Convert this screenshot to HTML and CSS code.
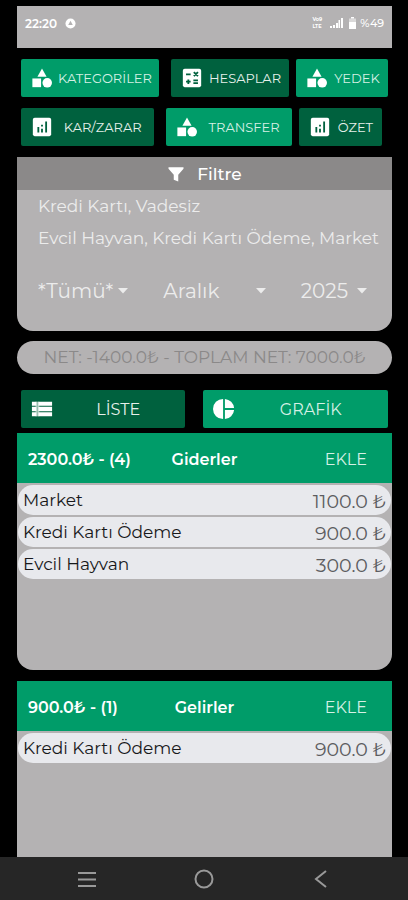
FILE: index.html
```html
<!DOCTYPE html>
<html lang="tr">
<head>
<meta charset="utf-8">
<meta name="viewport" content="width=device-width, initial-scale=1">
<title>Bütçe</title>
<link rel="stylesheet" href="styles.css">
</head>
<body>
<svg class="defs" aria-hidden="true">
  <symbol id="shapes" viewBox="0 0 24 24"><path d="M12 1.500 17 10.500H7z"/><path d="M1.500 12.500h9.500v9.500H1.500z"/><circle cx="17.700" cy="17.200" r="5.200"/></symbol>
  <symbol id="calc" viewBox="0 0 24 24"><rect x="2" y="2" width="20" height="20" rx="2"/><path class="cut" d="M5.500 8h5M14 5.500l4.500 4.500M18.500 5.500 14 10M5.500 16h5M8 13.500v5M13.500 14.500h5M13.500 17.500h5"/></symbol>
  <symbol id="chart" viewBox="0 0 24 24"><rect x="2" y="2" width="20" height="20" rx="2"/><path class="cut" d="M8 12v6M12 9.500v2M12 14v4M16.500 6v12"/></symbol>
  <symbol id="funnel" viewBox="0 0 24 24"><path d="M2 3h20v2l-7 8v9l-6-2.500V13L2 5z"/></symbol>
  <symbol id="list" viewBox="0 0 24 24"><path opacity="0.6" d="M5 4h4v16H5z"/><path d="M1 4h5v4.500H1zM8 4h15v4.500H8zM1 9.500h5v5H1zM8 9.500h15v5H8zM1 15.500h5V20H1zM8 15.500h15V20H8z"/></symbol>
  <symbol id="pie" viewBox="0 0 24 24"><path d="M11 1v22a11 11 0 0 1 0-22zM13 1a11 11 0 0 1 10 10H13zM13 13h10a11 11 0 0 1-10 10z"/></symbol>
  <symbol id="caret" viewBox="0 0 10 6"><path d="M0 0h10L5 5.500z"/></symbol>
</svg>
<div class="app">
  <header class="status">
    <span class="clock">22:20</span>
    <svg class="badge" viewBox="0 0 12 12" aria-hidden="true"><circle cx="6" cy="6" r="5.500"/><path d="M6 3 8.500 7.500h-5z"/></svg>
    <span class="volte"><span>Vo9</span><span>LTE</span></span>
    <svg class="signal" viewBox="0 0 13 12" aria-hidden="true"><path d="M0 9h2v2H0zM3 8h2v3H3zM6 6h2v5H6zM8.500 3h1.500v8H8.500zM11 1h2v10h-2z"/></svg>
    <svg class="battery" viewBox="0 0 7 12" aria-hidden="true"><path class="faint" d="M0 1.500h7V12H0z"/><path d="M2 0h3v1.500H2zM0 5h7v7H0z"/></svg>
    <span>%49</span>
  </header>

  <main class="content">
    <nav class="menu" aria-label="Menü">
      <div class="menu-row accounts">
        <button class="btn light"><svg class="icon"><use href="#shapes"/></svg><span>KATEGORİLER</span></button>
        <button class="btn dark"><svg class="icon"><use href="#calc"/></svg><span>HESAPLAR</span></button>
        <button class="btn light"><svg class="icon"><use href="#shapes"/></svg><span>YEDEK</span></button>
      </div>
      <div class="menu-row reports">
        <button class="btn dark"><svg class="icon"><use href="#chart"/></svg><span>KAR/ZARAR</span></button>
        <button class="btn light"><svg class="icon"><use href="#shapes"/></svg><span>TRANSFER</span></button>
        <button class="btn dark"><svg class="icon"><use href="#chart"/></svg><span>ÖZET</span></button>
      </div>
    </nav>

    <section class="filter">
      <h2 class="filter-title"><svg class="funnel"><use href="#funnel"/></svg>Filtre</h2>
      <button class="pick">Kredi Kartı, Vadesiz</button>
      <button class="pick">Evcil Hayvan, Kredi Kartı Ödeme, Market</button>
      <div class="period">
        <label class="drop"><select aria-label="Gün"><option>*Tümü*</option></select><svg class="caret"><use href="#caret"/></svg></label>
        <label class="drop"><select aria-label="Ay"><option>Aralık</option></select><svg class="caret"><use href="#caret"/></svg></label>
        <label class="drop"><select aria-label="Yıl"><option>2025</option></select><svg class="caret"><use href="#caret"/></svg></label>
      </div>
    </section>

    <p class="net">NET: -1400.0₺ - TOPLAM NET: 7000.0₺</p>

    <div class="views">
      <button class="btn dark"><svg class="icon"><use href="#list"/></svg><span>LİSTE</span></button>
      <button class="btn light"><svg class="icon"><use href="#pie"/></svg><span>GRAFİK</span></button>
    </div>

    <section class="panel expenses">
      <header class="panel-head"><strong>2300.0₺ - (4)</strong><h2>Giderler</h2><button>EKLE</button></header>
      <ul class="rows">
        <li><span>Market</span><span class="sum">1100.0 ₺</span></li>
        <li><span>Kredi Kartı Ödeme</span><span class="sum">900.0 ₺</span></li>
        <li><span>Evcil Hayvan</span><span class="sum">300.0 ₺</span></li>
      </ul>
    </section>

    <section class="panel income">
      <header class="panel-head"><strong>900.0₺ - (1)</strong><h2>Gelirler</h2><button>EKLE</button></header>
      <ul class="rows">
        <li><span>Kredi Kartı Ödeme</span><span class="sum">900.0 ₺</span></li>
      </ul>
    </section>
  </main>

  <nav class="system" aria-label="Sistem">
    <button aria-label="Son uygulamalar"><svg viewBox="0 0 20 20"><path d="M1 4h18M1 10.500h18M1 17h18"/></svg></button>
    <button aria-label="Ana ekran"><svg viewBox="0 0 20 20"><circle cx="10" cy="10" r="8.500"/></svg></button>
    <button aria-label="Geri"><svg viewBox="0 0 20 20"><path d="M15 2 5 10l10 8"/></svg></button>
  </nav>
</div>
</body>
</html>
```
FILE: styles.css
```css
* { box-sizing: border-box; }
body {
  margin: 0;
  background: #000;
  color: #fff;
  font-family: Montserrat, Inter, "Noto Sans", sans-serif;
  font-size: 17px;
}
h2, p, ul { margin: 0; padding: 0; list-style: none; }
button, select {
  margin: 0;
  padding: 0;
  border: 0;
  background: none;
  color: inherit;
  font: inherit;
}
svg { fill: currentColor; flex: none; }
.defs { position: absolute; width: 0; height: 0; }

.app { display: flex; flex-direction: column; height: 100vh; }

.status {
  display: flex;
  align-items: center;
  height: 42px;
  margin: 6px 16px 0 17px;
  padding: 0 8px 8px;
  background: #b4b2b3;
  font-size: 11px;
  font-weight: 500;
}
.clock { font-size: 12px; font-weight: 600; }
.badge { width: 11px; height: 11px; margin-left: 8px; }
.badge path { fill: #b4b2b3; }
.volte { display: grid; margin-left: auto; font-size: 5px; line-height: 7px; font-weight: 700; }
.signal { width: 13px; height: 12px; margin-left: 8px; }
.battery { width: 7px; height: 12px; margin: 0 4px 0 6px; }
.faint { opacity: 0.5; }

.content {
  display: flex;
  flex-direction: column;
  flex: 1;
  min-height: 0;
  padding: 11px 16px 0 17px;
}
.menu { display: grid; gap: 11px; padding: 0 4px; }
.menu-row { display: grid; column-gap: 7px; }
.menu-row .btn:first-child { margin-right: 5px; }
.accounts { grid-template-columns: 143fr 118fr 92fr; }
.reports { grid-template-columns: 138fr 125fr 83fr; padding-right: 6px; }
.btn {
  display: flex;
  align-items: center;
  gap: 4px;
  min-width: 0;
  height: 38px;
  padding: 0 6px 0 10px;
  border-radius: 2px;
  font-size: 13px;
  white-space: nowrap;
}
.btn span { flex: 1; text-align: center; }
.light { background: #009c69; color: #d5f0e5; }
.dark { background: #00613e; color: #e6f0eb; }
.icon { width: 22px; height: 22px; color: #fff; }
.cut { fill: none; stroke: #00613e; stroke-width: 2; }

.filter {
  height: 174px;
  margin-top: 11px;
  border-radius: 0 0 16px 16px;
  background: #b4b2b3;
  color: #ececec;
}
.filter-title {
  display: flex;
  align-items: center;
  justify-content: center;
  gap: 12px;
  height: 33px;
  background: #8b8989;
  color: #fff;
  font-size: 17px;
  font-weight: 500;
}
.funnel { width: 18px; height: 18px; }
.pick {
  display: block;
  width: 100%;
  height: 32px;
  padding-left: 21px;
  text-align: left;
  white-space: nowrap;
}
.period {
  display: grid;
  grid-template-columns: 90fr 102fr 66fr;
  column-gap: 35px;
  padding: 25px 25px 0 21px;
  font-size: 20px;
}
.drop { display: flex; align-items: center; }
.drop select { flex: 1; min-width: 0; height: 24px; appearance: none; }
.caret { width: 10px; height: 6px; }

.net {
  height: 33px;
  margin-top: 10px;
  border-radius: 17px;
  background: #b4b2b3;
  color: #8b8989;
  line-height: 33px;
  text-align: center;
  white-space: nowrap;
}

.views {
  display: grid;
  grid-template-columns: 164fr 184fr;
  column-gap: 18px;
  margin: 16px 4px 5px;
}
.views .btn { font-size: 16px; }

.panel { background: #b4b2b3; }
.expenses { height: 237px; border-radius: 0 0 16px 16px; }
.income { flex: 1; min-height: 0; margin-top: 11px; }
.panel-head {
  display: grid;
  grid-template-columns: 1fr auto 1fr;
  align-items: center;
  height: 50px;
  padding: 2px 11px 0;
  background: #009c69;
  font-size: 16px;
}
.panel-head strong { font-size: 16px; font-weight: 600; }
.panel-head h2 { font-size: 16px; font-weight: 600; }
.panel-head button { justify-self: end; padding-right: 14px; color: #d5f0e5; }
.rows { display: grid; gap: 2px; padding: 2px 1px; }
.rows li {
  display: flex;
  align-items: center;
  justify-content: space-between;
  height: 30px;
  padding: 0 5px;
  border-radius: 15px;
  background: #e8e9ed;
  color: #17181a;
}
.sum { padding-top: 4px; color: #5c5c60; font-size: 19px; line-height: 24px; }

.system {
  display: flex;
  justify-content: center;
  gap: 17%;
  height: 43px;
  background: #262626;
  color: #999;
}
.system button { display: grid; place-items: center; width: 48px; }
.system svg { width: 20px; height: 20px; fill: none; stroke: currentColor; stroke-width: 2; }
```
